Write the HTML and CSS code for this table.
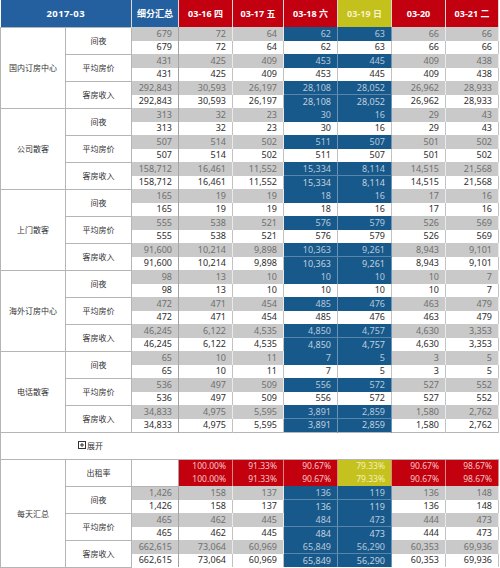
FILE: index.html
```html
<!DOCTYPE html>
<html lang="zh-CN">
<head>
<meta charset="utf-8">
<title>2017-03 细分汇总</title>
<link rel="stylesheet" href="styles.css">
</head>
<body>
<table class="report">
  <colgroup>
    <col class="c-group"><col class="c-metric"><col class="c-total">
    <col class="c-d1"><col class="c-d2"><col class="c-d3"><col class="c-d4"><col class="c-d5"><col class="c-d6">
  </colgroup>
  <thead>
    <tr class="head">
      <th colspan="2" class="h-blue h-title">2017-03</th>
      <th class="h-blue">细分汇总</th>
      <th class="h-red">03-16 四</th>
      <th class="h-red">03-17 五</th>
      <th class="h-red">03-18 六</th>
      <th class="h-yellow">03-19 日</th>
      <th class="h-red">03-20</th>
      <th class="h-red">03-21 二</th>
    </tr>
  </thead>
  <tbody>
    <!-- 国内订房中心 -->
    <tr><td rowspan="6" class="group">国内订房中心</td><td rowspan="2" class="metric">间夜</td><td class="prev tot">679</td><td class="prev">72</td><td class="prev">64</td><td class="hl">62</td><td class="hl">63</td><td class="prev">66</td><td class="prev">66</td></tr>
    <tr><td class="cur tot">679</td><td class="cur">72</td><td class="cur">64</td><td class="cur">62</td><td class="cur">63</td><td class="cur">66</td><td class="cur">66</td></tr>
    <tr><td rowspan="2" class="metric">平均房价</td><td class="prev tot">431</td><td class="prev">425</td><td class="prev">409</td><td class="hl">453</td><td class="hl">445</td><td class="prev">409</td><td class="prev">438</td></tr>
    <tr><td class="cur tot">431</td><td class="cur">425</td><td class="cur">409</td><td class="cur">453</td><td class="cur">445</td><td class="cur">409</td><td class="cur">438</td></tr>
    <tr><td rowspan="2" class="metric">客房收入</td><td class="prev tot">292,843</td><td class="prev">30,593</td><td class="prev">26,197</td><td class="hl hl-top">28,108</td><td class="hl hl-top">28,052</td><td class="prev">26,962</td><td class="prev">28,933</td></tr>
    <tr><td class="cur tot">292,843</td><td class="cur">30,593</td><td class="cur">26,197</td><td class="hl hl-low">28,108</td><td class="hl hl-low">28,052</td><td class="cur">26,962</td><td class="cur">28,933</td></tr>

    <!-- 公司散客 -->
    <tr><td rowspan="6" class="group">公司散客</td><td rowspan="2" class="metric">间夜</td><td class="prev tot">313</td><td class="prev">32</td><td class="prev">23</td><td class="hl">30</td><td class="hl">16</td><td class="prev">29</td><td class="prev">43</td></tr>
    <tr><td class="cur tot">313</td><td class="cur">32</td><td class="cur">23</td><td class="cur">30</td><td class="cur">16</td><td class="cur">29</td><td class="cur">43</td></tr>
    <tr><td rowspan="2" class="metric">平均房价</td><td class="prev tot">507</td><td class="prev">514</td><td class="prev">502</td><td class="hl">511</td><td class="hl">507</td><td class="prev">501</td><td class="prev">502</td></tr>
    <tr><td class="cur tot">507</td><td class="cur">514</td><td class="cur">502</td><td class="cur">511</td><td class="cur">507</td><td class="cur">501</td><td class="cur">502</td></tr>
    <tr><td rowspan="2" class="metric">客房收入</td><td class="prev tot">158,712</td><td class="prev">16,461</td><td class="prev">11,552</td><td class="hl hl-top">15,334</td><td class="hl hl-top">8,114</td><td class="prev">14,515</td><td class="prev">21,568</td></tr>
    <tr><td class="cur tot">158,712</td><td class="cur">16,461</td><td class="cur">11,552</td><td class="hl hl-low">15,334</td><td class="hl hl-low">8,114</td><td class="cur">14,515</td><td class="cur">21,568</td></tr>

    <!-- 上门散客 -->
    <tr><td rowspan="6" class="group">上门散客</td><td rowspan="2" class="metric">间夜</td><td class="prev tot">165</td><td class="prev">19</td><td class="prev">19</td><td class="hl">18</td><td class="hl">16</td><td class="prev">17</td><td class="prev">16</td></tr>
    <tr><td class="cur tot">165</td><td class="cur">19</td><td class="cur">19</td><td class="cur">18</td><td class="cur">16</td><td class="cur">17</td><td class="cur">16</td></tr>
    <tr><td rowspan="2" class="metric">平均房价</td><td class="prev tot">555</td><td class="prev">538</td><td class="prev">521</td><td class="hl">576</td><td class="hl">579</td><td class="prev">526</td><td class="prev">569</td></tr>
    <tr><td class="cur tot">555</td><td class="cur">538</td><td class="cur">521</td><td class="cur">576</td><td class="cur">579</td><td class="cur">526</td><td class="cur">569</td></tr>
    <tr><td rowspan="2" class="metric">客房收入</td><td class="prev tot">91,600</td><td class="prev">10,214</td><td class="prev">9,898</td><td class="hl hl-top">10,363</td><td class="hl hl-top">9,261</td><td class="prev">8,943</td><td class="prev">9,101</td></tr>
    <tr><td class="cur tot">91,600</td><td class="cur">10,214</td><td class="cur">9,898</td><td class="hl hl-low">10,363</td><td class="hl hl-low">9,261</td><td class="cur">8,943</td><td class="cur">9,101</td></tr>

    <!-- 海外订房中心 -->
    <tr><td rowspan="6" class="group">海外订房中心</td><td rowspan="2" class="metric">间夜</td><td class="prev tot">98</td><td class="prev">13</td><td class="prev">10</td><td class="hl">10</td><td class="hl">10</td><td class="prev">10</td><td class="prev">7</td></tr>
    <tr><td class="cur tot">98</td><td class="cur">13</td><td class="cur">10</td><td class="cur">10</td><td class="cur">10</td><td class="cur">10</td><td class="cur">7</td></tr>
    <tr><td rowspan="2" class="metric">平均房价</td><td class="prev tot">472</td><td class="prev">471</td><td class="prev">454</td><td class="hl">485</td><td class="hl">476</td><td class="prev">463</td><td class="prev">479</td></tr>
    <tr><td class="cur tot">472</td><td class="cur">471</td><td class="cur">454</td><td class="cur">485</td><td class="cur">476</td><td class="cur">463</td><td class="cur">479</td></tr>
    <tr><td rowspan="2" class="metric">客房收入</td><td class="prev tot">46,245</td><td class="prev">6,122</td><td class="prev">4,535</td><td class="hl hl-top">4,850</td><td class="hl hl-top">4,757</td><td class="prev">4,630</td><td class="prev">3,353</td></tr>
    <tr><td class="cur tot">46,245</td><td class="cur">6,122</td><td class="cur">4,535</td><td class="hl hl-low">4,850</td><td class="hl hl-low">4,757</td><td class="cur">4,630</td><td class="cur">3,353</td></tr>

    <!-- 电话散客 -->
    <tr><td rowspan="6" class="group">电话散客</td><td rowspan="2" class="metric">间夜</td><td class="prev tot">65</td><td class="prev">10</td><td class="prev">11</td><td class="hl">7</td><td class="hl">5</td><td class="prev">3</td><td class="prev">5</td></tr>
    <tr><td class="cur tot">65</td><td class="cur">10</td><td class="cur">11</td><td class="cur">7</td><td class="cur">5</td><td class="cur">3</td><td class="cur">5</td></tr>
    <tr><td rowspan="2" class="metric">平均房价</td><td class="prev tot">536</td><td class="prev">497</td><td class="prev">509</td><td class="hl">556</td><td class="hl">572</td><td class="prev">527</td><td class="prev">552</td></tr>
    <tr><td class="cur tot">536</td><td class="cur">497</td><td class="cur">509</td><td class="cur">556</td><td class="cur">572</td><td class="cur">527</td><td class="cur">552</td></tr>
    <tr><td rowspan="2" class="metric">客房收入</td><td class="prev tot">34,833</td><td class="prev">4,975</td><td class="prev">5,595</td><td class="hl hl-top">3,891</td><td class="hl hl-top">2,859</td><td class="prev">1,580</td><td class="prev">2,762</td></tr>
    <tr><td class="cur tot">34,833</td><td class="cur">4,975</td><td class="cur">5,595</td><td class="hl hl-low">3,891</td><td class="hl hl-low">2,859</td><td class="cur">1,580</td><td class="cur">2,762</td></tr>

    <!-- 展开 -->
    <tr class="expand-row"><td colspan="9" class="expand"><span class="expand-btn"><svg class="plus" width="8" height="8" viewBox="0 0 8 8" aria-hidden="true"><rect x="0.5" y="0.5" width="7" height="7" fill="none" stroke="#333" stroke-width="1"/><path d="M2 4h4M4 2v4" stroke="#333" stroke-width="1"/></svg>展开</span></td></tr>

    <!-- 每天汇总 -->
    <tr><td rowspan="8" class="group">每天汇总</td><td rowspan="2" class="metric">出租率</td><td rowspan="2" class="blank"></td><td class="rate">100.00%</td><td class="rate">91.33%</td><td class="rate">90.67%</td><td class="rate rate-y">79.33%</td><td class="rate">90.67%</td><td class="rate">98.67%</td></tr>
    <tr><td class="rate">100.00%</td><td class="rate">91.33%</td><td class="rate">90.67%</td><td class="rate rate-y">79.33%</td><td class="rate">90.67%</td><td class="rate">98.67%</td></tr>
    <tr><td rowspan="2" class="metric">间夜</td><td class="prev tot">1,426</td><td class="prev">158</td><td class="prev">137</td><td class="hl hl-top">136</td><td class="hl hl-top">119</td><td class="prev">136</td><td class="prev">148</td></tr>
    <tr><td class="cur tot">1,426</td><td class="cur">158</td><td class="cur">137</td><td class="hl hl-low">136</td><td class="hl hl-low">119</td><td class="cur">136</td><td class="cur">148</td></tr>
    <tr><td rowspan="2" class="metric">平均房价</td><td class="prev tot">465</td><td class="prev">462</td><td class="prev">445</td><td class="hl hl-top">484</td><td class="hl hl-top">473</td><td class="prev">444</td><td class="prev">473</td></tr>
    <tr><td class="cur tot">465</td><td class="cur">462</td><td class="cur">445</td><td class="hl hl-low">484</td><td class="hl hl-low">473</td><td class="cur">444</td><td class="cur">473</td></tr>
    <tr><td rowspan="2" class="metric">客房收入</td><td class="prev tot">662,615</td><td class="prev">73,064</td><td class="prev">60,969</td><td class="hl hl-top">65,849</td><td class="hl hl-top">56,290</td><td class="prev">60,353</td><td class="prev">69,936</td></tr>
    <tr><td class="cur tot">662,615</td><td class="cur">73,064</td><td class="cur">60,969</td><td class="hl hl-low">65,849</td><td class="hl hl-low">56,290</td><td class="cur">60,353</td><td class="cur">69,936</td></tr>
  </tbody>
</table>
</body>
</html>
```
FILE: styles.css
```css
html, body {
  margin: 0;
  padding: 0;
  background: #ffffff;
}

body {
  font-family: "Noto Sans", "Noto Sans CJK SC", sans-serif;
  color: #333333;
}

.report {
  width: 498px;
  table-layout: fixed;
  border-collapse: collapse;
  font-size: 9px;
}

.c-group { width: 65px; }
.c-metric { width: 66px; }
.c-total { width: 47px; }
.c-d1 { width: 54px; }
.c-d2 { width: 51px; }
.c-d3 { width: 54px; }
.c-d4 { width: 54px; }
.c-d5 { width: 54px; }
.c-d6 { width: 53px; }

.report td,
.report th {
  padding: 0;
  white-space: nowrap;
  overflow: hidden;
}

.report tr { height: 13.5px; }

/* header */
.report .head { height: 27px; }

.head th {
  color: #ffffff;
  font-weight: 700;
  font-size: 9px;
  text-align: center;
  vertical-align: middle;
  border-right: 1px solid #d9d9d9;
}

.h-blue { background: #2460a0; }
.h-red { background: #c3000f; }
.head .h-yellow { background: #c4c01c; color: #f7f3c8; }

.head .h-title {
  font-size: 9.5px;
  letter-spacing: 0.4px;
}

/* label cells */
.report .group,
.report .metric {
  font-size: 8px;
  text-align: center;
  vertical-align: middle;
  background: #ffffff;
  color: #333333;
  border: 1px solid #b5b5b5;
}

/* data cells */
.report .prev,
.report .cur,
.report .hl,
.report .rate,
.report .blank {
  text-align: right;
  padding: 0 6px 0 0;
  line-height: 12px;
  border-right: 1px solid #c2c2c2;
}

.report .prev {
  background: #c9c9c9;
  color: #707070;
  border-right-color: #e9e9e9;
}

.report .cur {
  background: #ffffff;
  color: #2e2e2e;
}

.report .prev.tot,
.report .cur.tot { border-right-color: #a3a3a3; }

.report .hl {
  background: #17598b;
  color: #b8c8d8;
  border-right-color: #6d94b6;
}

.report .hl-top { border-bottom: 1px solid #5a85ab; }

.report .hl-low { color: #c3d1de; }

.report .blank {
  background: #ffffff;
  border-right-color: #a3a3a3;
  border-bottom: 1px solid #b5b5b5;
}

.report .rate {
  background: #c2000e;
  color: #f3c6c6;
  font-size: 8.5px;
  border-right-color: #d88a8a;
}

.report .rate.rate-y {
  background: #c5c220;
  color: #f4f1b8;
}

/* expand row */
.report .expand-row { height: 27px; }

.report .expand {
  border: 1px solid #b5b5b5;
  border-right: none;
  padding-left: 77px;
  vertical-align: middle;
  font-size: 8px;
  color: #333333;
}

.expand-btn {
  display: inline-flex;
  align-items: center;
  gap: 1px;
}

.plus { display: block; }
```
